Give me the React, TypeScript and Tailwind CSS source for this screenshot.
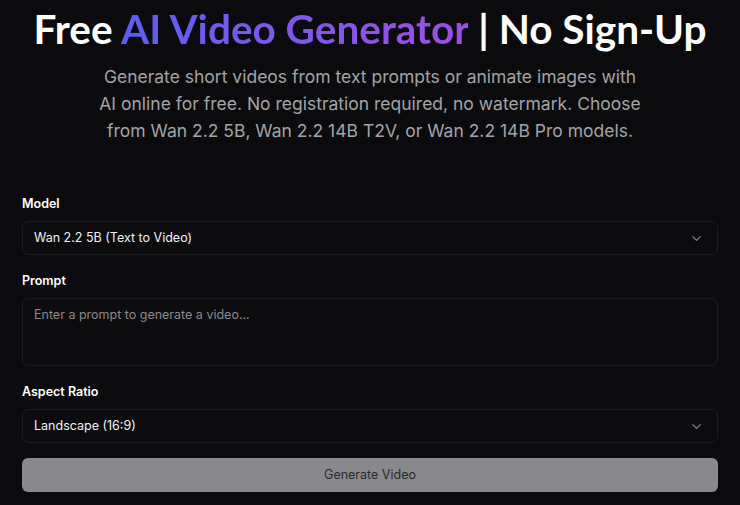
import { ChevronDown } from 'lucide-react';

function Field({ label, children }: { label: string; children: React.ReactNode }) {
	return (
		<div className="flex flex-col gap-[7px]">
			<label className="text-[12.5px] leading-5 font-semibold text-white">{label}</label>
			{children}
		</div>
	);
}

function SelectBox({ value }: { value: string }) {
	return (
		<div className="flex h-[34px] items-center justify-between rounded-md border border-[#1c1c1f] bg-[#0c0c0e] pr-[13px] pl-[11px] text-[12.5px] text-[#f2f2f4]">
			<span>{value}</span>
			<ChevronDown className="h-[15px] w-[15px] text-[#8b8b90]" strokeWidth={1.75} />
		</div>
	);
}

export default function App() {
	return (
		<main
			className="min-h-[505px] bg-[#0b0b0d] px-[22px]"
			style={{ fontFamily: 'Inter, "Noto Sans", sans-serif' }}
		>
			<div className="flex flex-col items-center pt-[5px] text-center">
				<h1
					className="text-[40.5px] leading-[48px] font-bold whitespace-nowrap text-white"
					style={{ fontFamily: 'Lato, Inter, sans-serif' }}
				>
					Free{' '}
					<span className="bg-gradient-to-r from-[#5b5df2] to-[#9d4fe3] bg-clip-text text-transparent">
						AI Video Generator
					</span>{' '}
					| No Sign-Up
				</h1>
				<p className="mt-[10px] text-[17.5px] leading-[27px] text-[#a3a3a8]">
					Generate short videos from text prompts or animate images with
					<br />
					AI online for free. No registration required, no watermark. Choose
					<br />
					from Wan 2.2 5B, Wan 2.2 14B T2V, or Wan 2.2 14B Pro models.
				</p>
			</div>

			<div className="mt-[50px] flex flex-col gap-4">
				<Field label="Model">
					<SelectBox value="Wan 2.2 5B (Text to Video)" />
				</Field>
				<Field label="Prompt">
					<textarea
						className="h-[68px] resize-none rounded-md border border-[#1c1c1f] bg-[#0c0c0e] px-[11px] py-[7px] text-[12.5px] text-white outline-none placeholder:text-[#8a8a90]"
						placeholder="Enter a prompt to generate a video..."
					/>
				</Field>
				<Field label="Aspect Ratio">
					<SelectBox value="Landscape (16:9)" />
				</Field>
				<button className="-mt-px h-[34px] rounded-md bg-[#89888c] text-[12.5px] text-[#2a2a2c]">
					Generate Video
				</button>
			</div>
		</main>
	);
}
